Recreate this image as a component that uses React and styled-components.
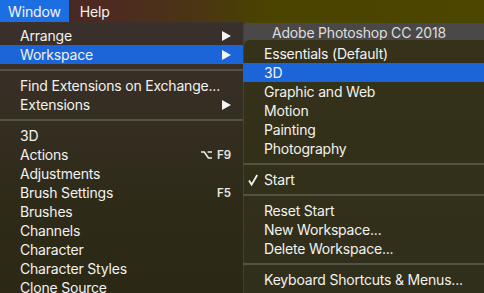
import React from 'react';
import styled, { createGlobalStyle } from 'styled-components';

const GlobalStyle = createGlobalStyle`
  html, body {
    margin: 0;
    padding: 0;
    width: 484px;
    height: 293px;
    overflow: hidden;
    background: #4b4500;
  }
  body {
    font-family: Inter, "Liberation Sans", sans-serif;
    -webkit-font-smoothing: antialiased;
  }
`;

const Screen = styled.div`
  width: 484px;
  height: 293px;
  display: flex;
  flex-direction: column;
  overflow: hidden;
`;

const MenuBar = styled.div`
  height: 22px;
  flex: none;
  display: flex;
  align-items: stretch;
  background: linear-gradient(90deg, #3e2620 0%, #4e2a22 22%, #4a3514 40%, #4b4300 55%, #4c4600 100%);
`;

const BarItem = styled.div`
  display: flex;
  align-items: center;
  padding: 0 ${({ $pad }) => $pad || 10}px;
  font-size: 14px;
  letter-spacing: -0.15px;
  color: #f4f4f4;
  background: ${({ $active }) => ($active ? '#1c6fe2' : 'transparent')};
`;

const Body = styled.div`
  flex: 1;
  display: flex;
  min-height: 0;
`;

const Menu = styled.div`
  width: 243px;
  flex: none;
  padding-top: 4px;
  background: linear-gradient(180deg, #3a302c 0%, #352e22 35%, #2d2a17 70%, #2b2915 100%);
`;

const Row = styled.div`
  height: 19px;
  display: flex;
  align-items: center;
  padding: 0 ${({ $right }) => $right || 12}px 0 ${({ $left }) => $left || 20}px;
  font-size: 14px;
  letter-spacing: -0.2px;
  color: #f2f2f0;
  background: ${({ $active }) => ($active ? '#1b65d8' : 'transparent')};
  position: relative;
`;

const Label = styled.span`
  flex: 1;
  white-space: nowrap;
`;

const Shortcut = styled.span`
  display: flex;
  align-items: center;
  gap: 5px;
  font-size: 11.5px;
  font-weight: 600;
  letter-spacing: 0;
  color: #e8e8e6;
`;

const Separator = styled.div`
  height: 12px;
  display: flex;
  align-items: center;

  &::after {
    content: '';
    flex: 1;
    height: 2px;
    background: #545240;
  }
`;

const SubColumn = styled.div`
  flex: 1;
  display: flex;
  flex-direction: column;
  padding-top: 1px;
  min-width: 0;
`;

const SubHeader = styled.div`
  height: 18px;
  margin-left: 1px;
  padding-left: 28px;
  display: flex;
  align-items: center;
  font-size: 14px;
  letter-spacing: -0.2px;
  color: #dedede;
  background: #4a4947;
  border-top-left-radius: 3px;
`;

const SubMenu = styled.div`
  flex: 1;
  padding-top: 4px;
  border-top-left-radius: 6px;
  margin-top: -1px;
  background: linear-gradient(180deg, #36321a 0%, #333019 40%, #302f1c 100%);
  box-shadow: inset 1px 0 0 rgba(120, 120, 110, 0.25);
`;

const Check = styled.svg`
  position: absolute;
  left: 5px;
  top: 4px;
`;

const Arrow = () => (
  <svg width="9" height="10" viewBox="0 0 9 10">
    <polygon points="0,0 9,5 0,10" fill="#f4f4f4" />
  </svg>
);

const OptionKey = () => (
  <svg width="11" height="8" viewBox="0 0 11 8">
    <path d="M0 1 H3.3 L7.4 7 H11 M6.6 1 H11" stroke="#ececea" strokeWidth="1.6" fill="none" />
  </svg>
);

const leftItems = [
  { label: 'Arrange', arrow: true },
  { label: 'Workspace', arrow: true, active: true },
  { sep: true },
  { label: 'Find Extensions on Exchange...' },
  { label: 'Extensions', arrow: true },
  { sep: true },
  { label: '3D' },
  { label: 'Actions', shortcut: 'F9', option: true },
  { label: 'Adjustments' },
  { label: 'Brush Settings', shortcut: 'F5' },
  { label: 'Brushes' },
  { label: 'Channels' },
  { label: 'Character' },
  { label: 'Character Styles' },
  { label: 'Clone Source' },
];

const subItems = [
  { label: 'Essentials (Default)' },
  { label: '3D', active: true },
  { label: 'Graphic and Web' },
  { label: 'Motion' },
  { label: 'Painting' },
  { label: 'Photography' },
  { sep: true },
  { label: 'Start', checked: true },
  { sep: true },
  { label: 'Reset Start' },
  { label: 'New Workspace...' },
  { label: 'Delete Workspace...' },
  { sep: true },
  { label: 'Keyboard Shortcuts & Menus...' },
];

const App = () => {
  return (
    <Screen>
      <GlobalStyle />
      <MenuBar>
        <BarItem $active $pad={8}>Window</BarItem>
        <BarItem $pad={11}>Help</BarItem>
      </MenuBar>
      <Body>
        <Menu>
          {leftItems.map((item, i) =>
            item.sep ? (
              <Separator key={i} />
            ) : (
              <Row key={i} $active={item.active}>
                <Label>{item.label}</Label>
                {item.arrow && <Arrow />}
                {item.shortcut && (
                  <Shortcut>
                    {item.option && <OptionKey />}
                    {item.shortcut}
                  </Shortcut>
                )}
              </Row>
            )
          )}
        </Menu>
        <SubColumn>
          <SubHeader>Adobe Photoshop CC 2018</SubHeader>
          <SubMenu>
            {subItems.map((item, i) =>
              item.sep ? (
                <Separator key={i} />
              ) : (
                <Row key={i} $left={21} $active={item.active}>
                  {item.checked && (
                    <Check width="10" height="12" viewBox="0 0 10 12">
                      <path d="M1 6.5 L3.6 10.6 L9.2 1" stroke="#f2f2f0" strokeWidth="1.8" fill="none" />
                    </Check>
                  )}
                  <Label>{item.label}</Label>
                </Row>
              )
            )}
          </SubMenu>
        </SubColumn>
      </Body>
    </Screen>
  );
};

export default App;
